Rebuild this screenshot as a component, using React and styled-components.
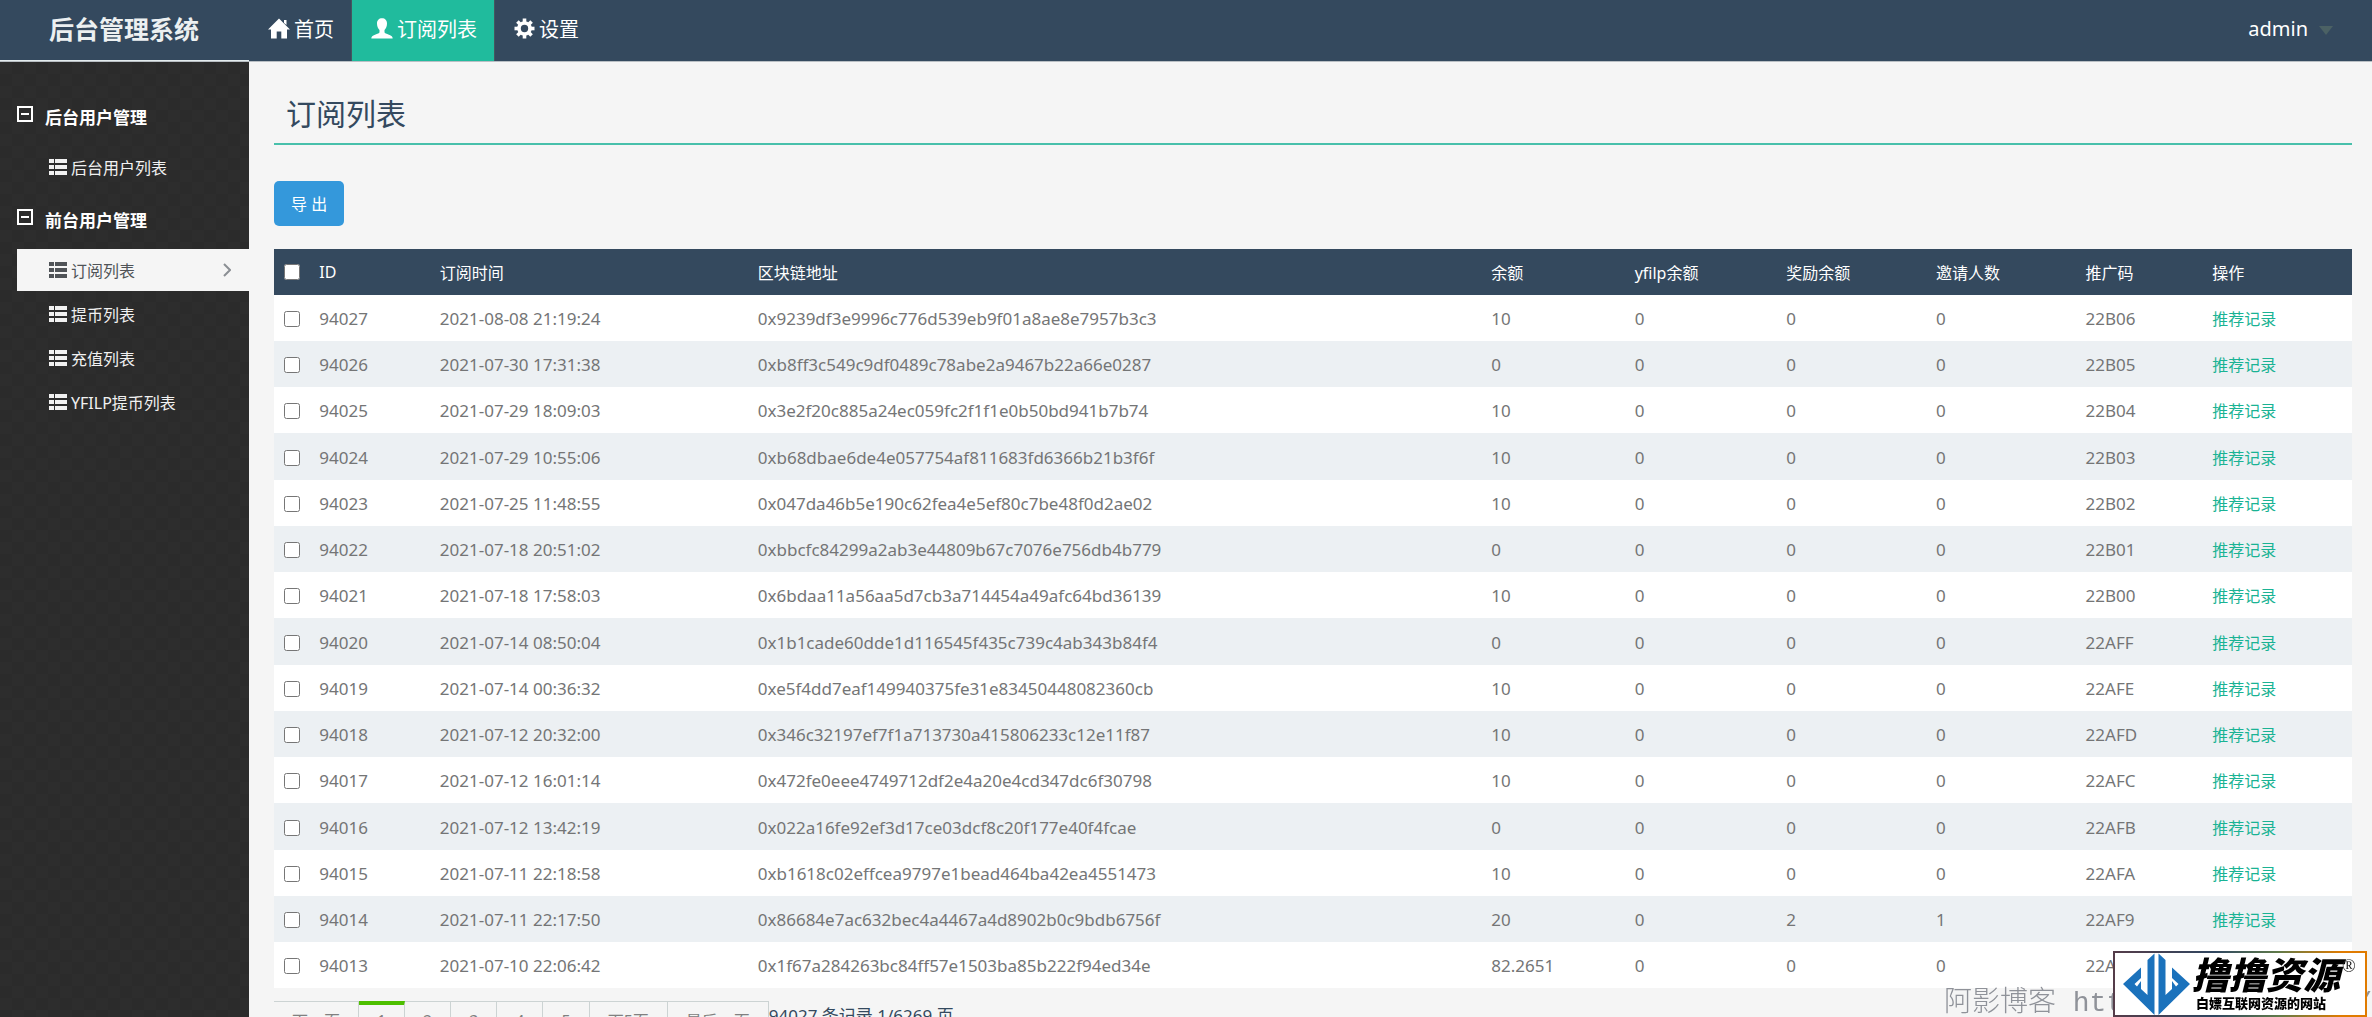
import React from 'react';
import styled, { createGlobalStyle } from 'styled-components';

const GlobalStyle = createGlobalStyle`
  * {
    box-sizing: border-box;
  }

  body {
    margin: 0;
    background-color: #f5f5f5;
    color: #34495e;
    font-family: 'Noto Sans', 'Noto Sans CJK SC', sans-serif;
    font-size: 16px;
  }

  a {
    text-decoration: none;
  }
`;

const Page = styled.div`
  height: 100vh;
  display: flex;
  flex-direction: column;
  overflow: hidden;
`;

const Header = styled.header`
  flex: none;
  height: 62px;
  display: flex;
  background-color: #34495e;
  border-bottom: 1px solid #b9bfc4;
`;

const Brand = styled.a`
  width: 249px;
  padding-left: 49px;
  border-bottom: 1px solid #e4ecee;
  color: #ecf0f1;
  font-size: 25px;
  font-weight: 700;
  line-height: 58px;
`;

const Nav = styled.nav`
  flex: 1;
  display: flex;
`;

const NavLink = styled.a`
  display: flex;
  align-items: center;
  gap: 4px;
  padding: 0 17px 4px 19px;
  border-right: 1px solid ${props => props.$last ? 'transparent' : '#46565f'};
  background-color: ${props => props.$active ? '#20bb9d' : 'transparent'};
  color: #fff;
  font-size: 20px;
`;

const UserButton = styled.button`
  display: flex;
  align-items: center;
  gap: 11px;
  padding: 0 39px 4px 20px;
  border: none;
  background: none;
  color: #fff;
  font-family: inherit;
  font-size: 20px;
`;

const Caret = styled.span`
  margin-top: 4px;
  border: 7px solid transparent;
  border-top: 9px solid #4b6164;
  border-bottom: none;
`;

const Body = styled.div`
  flex: 1;
  min-height: 0;
  display: flex;
`;

const Sidebar = styled.aside`
  flex: none;
  width: 249px;
  padding: 28px 0 0 17px;
  background: repeating-conic-gradient(#2b2b2b 0 25%, #2d2d2d 0 50%) 0 0 / 24px 24px;
`;

const GroupTitle = styled.h2`
  display: flex;
  align-items: center;
  gap: 12px;
  height: 52px;
  margin: 0;
  color: #fff;
  font-size: 17px;
  font-weight: 700;
`;

const Menu = styled.ul`
  margin: 0;
  padding: 4px 0 3px;
  list-style: none;
`;

const MenuLink = styled.a`
  display: flex;
  align-items: center;
  gap: 4px;
  height: 42px;
  margin-bottom: 2px;
  padding: 0 18px 0 32px;
  background-color: ${props => props.$active ? '#f5f5f5' : 'transparent'};
  color: ${props => props.$active ? '#4f5357' : '#f1f1f1'};
`;

const MenuText = styled.span`
  flex: 1;
`;

const Main = styled.main`
  flex: 1;
  min-width: 0;
  padding: 30px 20px 0 25px;
`;

const Title = styled.h1`
  margin: 0 0 36px;
  padding: 0 12px 7px;
  border-bottom: 2px solid #48c0ab;
  color: #34495e;
  font-size: 30px;
  font-weight: 400;
  line-height: 44px;
`;

const ExportButton = styled.button`
  display: block;
  height: 45px;
  margin-bottom: 23px;
  padding: 0 17px 2px;
  border: none;
  border-radius: 5px;
  background-color: #3498db;
  color: #fff;
  font-family: inherit;
  font-size: 16px;
`;

const Table = styled.table`
  width: 100%;
  table-layout: fixed;
  border-collapse: collapse;
  text-align: left;
`;

const Th = styled.th`
  height: 46px;
  padding: 0 0 0 10px;
  background-color: #34495e;
  color: #fff;
  font-size: 16px;
  font-weight: 400;
`;

const Row = styled.tr`
  height: 46px;
  background-color: #fff;

  &:nth-child(even) {
    background-color: #ecf0f3;
  }

  &:nth-child(4n) {
    height: 47px;
  }
`;

const Td = styled.td`
  padding: 2px 0 0 10px;
  color: #747576;
  font-size: 17px;
  line-height: 24px;
`;

const Checkbox = styled.input`
  display: block;
  width: 16px;
  height: 16px;
  margin: 0;
`;

const RecordLink = styled.a`
  color: #1ab394;
  font-size: 16px;
`;

const Pager = styled.div`
  display: flex;
  margin-top: 13px;
`;

const PageLink = styled.a`
  min-width: 46px;
  height: 46px;
  padding: ${props => props.$active ? '4px 10px 0' : '7px 18px 0'};
  border: 1px solid #ccd3d3;
  border-left: none;
  border-top: ${props => props.$active ? '4px solid #4dbf00' : '1px solid #ccd3d3'};
  color: #808080;
  font-size: 16px;
  line-height: 24px;
  text-align: center;
`;

const Total = styled.span`
  padding-top: 3px;
  color: #34495e;
  font-size: 17px;
  line-height: 24px;
`;

// watermark and site badge float over the page corner
const Watermark = styled.div`
  position: fixed;
  right: 0;
  bottom: 0;
  width: 428px;
  height: 31px;
  display: flex;
  justify-content: space-between;
  overflow: hidden;
  color: #8f9299;
  font-family: 'Liberation Mono', 'Noto Sans CJK SC', monospace;
  font-size: 28px;
  font-weight: 300;
  line-height: 36px;
  white-space: pre;
`;

const Badge = styled.div`
  position: fixed;
  right: 5px;
  bottom: 0;
  width: 254px;
  height: 66px;
  display: flex;
  align-items: center;
  gap: 2px;
  padding-left: 8px;
  border: 2px solid transparent;
  background:
    linear-gradient(#fff, #fff) padding-box,
    linear-gradient(90deg, #553c49, #2f4660 40%, #5f7a4a 65%, #e07b00 90%) border-box;
  color: #000;
`;

const BadgeText = styled.div`
  font-weight: 900;
  white-space: nowrap;
`;

const BadgeName = styled.div`
  display: flex;
  font-size: 37px;
  font-style: italic;
  line-height: 38px;
`;

const Registered = styled.span`
  margin-left: 2px;
  color: #222;
  font-family: 'Liberation Serif', serif;
  font-size: 18px;
  font-style: normal;
  font-weight: 400;
  line-height: 20px;
`;

const BadgeSlogan = styled.div`
  padding-left: 4px;
  font-size: 13px;
  line-height: 18px;
`;

const HomeIcon = () => (
  <svg width="22" height="21" viewBox="0 0 22 21" fill="currentColor">
    <path d="M11 0.5 22 11.5H19V20.5H13.3V13.5H8.7V20.5H3V11.5H0L11 0.5Z" />
    <path d="M16 2h2.5v5L16 5z" />
  </svg>
);

const UserIcon = () => (
  <svg width="22" height="21" viewBox="0 0 22 21" fill="currentColor">
    <path d="M11 0.3c-3 0-5 2-5 5.200c0 3 1 5 2.500 6.500v2.300c-.2 1-2 1.500-4.500 2.500C1.500 17.700.3 18.500.3 20.500h21.400c0-2-1.200-2.800-3.700-3.700c-2.500-1-4.300-1.500-4.500-2.500V12C15 10.500 16 8.500 16 5.500c0-3.200-2-5.200-5-5.200z" />
  </svg>
);

const CogIcon = () => (
  <svg width="21" height="21" viewBox="0 0 21 21" fill="none" stroke="currentColor">
    <circle cx="10.500" cy="10.500" r="5.500" strokeWidth="3.600" />
    {[0, 45, 90, 135, 180, 225, 270, 315].map((angle) => (
      <path key={angle} d="M10.500 0.500v3.500" strokeWidth="3.600" transform={`rotate(${angle} 10.500 10.500)`} />
    ))}
  </svg>
);

const ListIcon = () => (
  <svg width="18" height="16" viewBox="0 0 18 16" fill="currentColor">
    <path d="M0 0h5v4H0zM6 0h12v4H6zM0 6h5v4H0zM6 6h12v4H6zM0 12h5v4H0zM6 12h12v4H6z" />
  </svg>
);

const MinusIcon = () => (
  <svg width="16" height="20" viewBox="0 0 16 20" fill="none" stroke="currentColor" strokeWidth="2">
    <path d="M1 1h14v14H1zM4 8h8" />
  </svg>
);

const ChevronIcon = () => (
  <svg width="8" height="14" viewBox="0 0 8 14" fill="none" stroke="#8b8f94" strokeWidth="2">
    <path d="M1 1l6 6-6 6" />
  </svg>
);

const BadgeLogo = () => (
  <svg width="67" height="62" viewBox="0 0 67 62" fill="#1b72bc">
    <path d="M0 31L18 14.500V25L11.500 31L14 33.500L18 28V36L24.500 42V7L31.500 0.500V62Z" />
    <path d="M67 31L49 14.500V25L55.500 31L53 33.500L49 28V36L42.500 42V7L35.500 0.500V62Z" />
  </svg>
);

const columns = [
  { title: 'ID', width: '5.8%' },
  { title: '订阅时间', width: '15.3%' },
  { title: '区块链地址', width: '35.3%' },
  { title: '余额', width: '6.9%' },
  { title: 'yfilp余额', width: '7.3%' },
  { title: '奖励余额', width: '7.2%' },
  { title: '邀请人数', width: '7.2%' },
  { title: '推广码', width: '6.1%' },
  { title: '操作', width: '7.2%' },
];

// id, time, address, balance, yfilp, reward, invited, code
const rows = [
  ['94027', '2021-08-08 21:19:24', '0x9239df3e9996c776d539eb9f01a8ae8e7957b3c3', '10', '0', '0', '0', '22B06'],
  ['94026', '2021-07-30 17:31:38', '0xb8ff3c549c9df0489c78abe2a9467b22a66e0287', '0', '0', '0', '0', '22B05'],
  ['94025', '2021-07-29 18:09:03', '0x3e2f20c885a24ec059fc2f1f1e0b50bd941b7b74', '10', '0', '0', '0', '22B04'],
  ['94024', '2021-07-29 10:55:06', '0xb68dbae6de4e057754af811683fd6366b21b3f6f', '10', '0', '0', '0', '22B03'],
  ['94023', '2021-07-25 11:48:55', '0x047da46b5e190c62fea4e5ef80c7be48f0d2ae02', '10', '0', '0', '0', '22B02'],
  ['94022', '2021-07-18 20:51:02', '0xbbcfc84299a2ab3e44809b67c7076e756db4b779', '0', '0', '0', '0', '22B01'],
  ['94021', '2021-07-18 17:58:03', '0x6bdaa11a56aa5d7cb3a714454a49afc64bd36139', '10', '0', '0', '0', '22B00'],
  ['94020', '2021-07-14 08:50:04', '0x1b1cade60dde1d116545f435c739c4ab343b84f4', '0', '0', '0', '0', '22AFF'],
  ['94019', '2021-07-14 00:36:32', '0xe5f4dd7eaf149940375fe31e83450448082360cb', '10', '0', '0', '0', '22AFE'],
  ['94018', '2021-07-12 20:32:00', '0x346c32197ef7f1a713730a415806233c12e11f87', '10', '0', '0', '0', '22AFD'],
  ['94017', '2021-07-12 16:01:14', '0x472fe0eee4749712df2e4a20e4cd347dc6f30798', '10', '0', '0', '0', '22AFC'],
  ['94016', '2021-07-12 13:42:19', '0x022a16fe92ef3d17ce03dcf8c20f177e40f4fcae', '0', '0', '0', '0', '22AFB'],
  ['94015', '2021-07-11 22:18:58', '0xb1618c02effcea9797e1bead464ba42ea4551473', '10', '0', '0', '0', '22AFA'],
  ['94014', '2021-07-11 22:17:50', '0x86684e7ac632bec4a4467a4d8902b0c9bdb6756f', '20', '0', '2', '1', '22AF9'],
  ['94013', '2021-07-10 22:06:42', '0x1f67a284263bc84ff57e1503ba85b222f94ed34e', '82.2651', '0', '0', '0', '22AF8'],
];

const menu = [
  { title: '后台用户管理', items: ['后台用户列表'] },
  { title: '前台用户管理', items: ['订阅列表', '提币列表', '充值列表', 'YFILP提币列表'] },
];

const pages = ['下一页', '1', '2', '3', '4', '5', '下5页', '最后一页'];

const App = () => (
  <Page>
    <GlobalStyle />
    <Header>
      <Brand href="#">后台管理系统</Brand>
      <Nav>
        <NavLink href="#"><HomeIcon />首页</NavLink>
        <NavLink href="#" $active><UserIcon />订阅列表</NavLink>
        <NavLink href="#" $last><CogIcon />设置</NavLink>
      </Nav>
      <UserButton type="button">admin<Caret /></UserButton>
    </Header>

    <Body>
      <Sidebar>
        {menu.map((group) => (
          <section key={group.title}>
            <GroupTitle><MinusIcon />{group.title}</GroupTitle>
            <Menu>
              {group.items.map((item) => {
                const active = item === '订阅列表';
                return (
                  <li key={item}>
                    <MenuLink href="#" $active={active}>
                      <ListIcon />
                      <MenuText>{item}</MenuText>
                      {active && <ChevronIcon />}
                    </MenuLink>
                  </li>
                );
              })}
            </Menu>
          </section>
        ))}
      </Sidebar>

      <Main>
        <Title>订阅列表</Title>
        <ExportButton type="button">导 出</ExportButton>
        <Table>
          <colgroup>
            <col style={{ width: '1.7%' }} />
            {columns.map((col) => <col key={col.title} style={{ width: col.width }} />)}
          </colgroup>
          <thead>
            <tr>
              <Th><Checkbox type="checkbox" aria-label="全选" /></Th>
              {columns.map((col) => <Th key={col.title}>{col.title}</Th>)}
            </tr>
          </thead>
          <tbody>
            {rows.map((row) => (
              <Row key={row[0]}>
                <Td><Checkbox type="checkbox" aria-label={row[0]} /></Td>
                {row.map((value, i) => <Td key={i}>{value}</Td>)}
                <Td><RecordLink href="#">推荐记录</RecordLink></Td>
              </Row>
            ))}
          </tbody>
        </Table>
        <Pager>
          {pages.map((page) => (
            <PageLink key={page} href="#" $active={page === '1'}>{page}</PageLink>
          ))}
          <Total>94027 条记录 1/6269 页</Total>
        </Pager>
      </Main>
    </Body>

    <Watermark>
      <span>阿影博客 htt</span>
      <span>/</span>
    </Watermark>
    <Badge>
      <BadgeLogo />
      <BadgeText>
        <BadgeName>撸撸资源<Registered>®</Registered></BadgeName>
        <BadgeSlogan>白嫖互联网资源的网站</BadgeSlogan>
      </BadgeText>
    </Badge>
  </Page>
);

export default App;
